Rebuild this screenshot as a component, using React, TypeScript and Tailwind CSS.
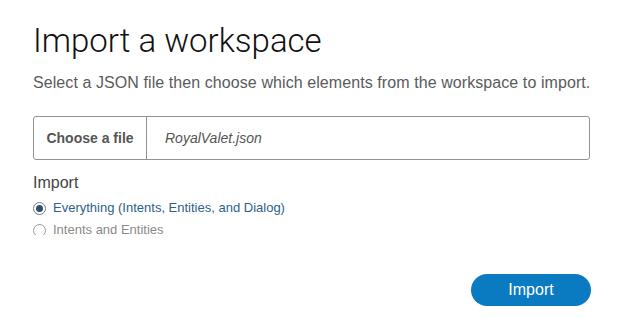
export default function App() {
  return (
    <div className="w-[619px] h-[322px] bg-white overflow-hidden font-['Liberation_Sans',Arial,sans-serif] pl-[33px] pt-[22px]">
      <div className="w-[558px]">
        <h1 className="font-['Roboto',sans-serif] text-[33px] leading-[38px] text-[#111] font-light">
          Import a workspace
        </h1>
        <p className="mt-[13px] whitespace-nowrap text-[16px] leading-[20px] text-[#5b5b5b] tracking-[0.08px]">
          Select a JSON file then choose which elements from the workspace to import.
        </p>

        {/* file picker */}
        <div className="mt-[23px] flex h-[44px] w-[557px] rounded-[3px] border border-[#8d9495]">
          <div className="flex w-[113px] items-center justify-center border-r border-[#8d9495] text-[14px] font-bold text-[#555]">
            Choose a file
          </div>
          <div className="flex flex-1 items-center pl-[18px] text-[14px] italic text-[#555]">
            RoyalValet.json
          </div>
        </div>

        <div className="mt-[13px] text-[16px] leading-[20px] text-[#444]">Import</div>

        <div className="mt-[7px] h-[35px] overflow-hidden flex flex-col gap-[6px]">
          <label className="flex items-center gap-[7px] text-[13px] leading-[16px] text-[#2d5f8b]">
            <span className="flex h-[13px] w-[13px] items-center justify-center rounded-full border border-[#777]">
              <span className="h-[7px] w-[7px] rounded-full bg-[#2d4f6e]" />
            </span>
            Everything (Intents, Entities, and Dialog)
          </label>
          <label className="flex items-center gap-[7px] text-[13px] leading-[16px] text-[#8a8a8a]">
            <span className="h-[13px] w-[13px] rounded-full border border-[#999]" />
            Intents and Entities
          </label>
        </div>

        <div className="mt-[39px] flex justify-end">
          <button className="h-[32px] w-[120px] rounded-full bg-[#0b7bc1] text-[16px] text-white">
            Import
          </button>
        </div>
      </div>
    </div>
  );
}
